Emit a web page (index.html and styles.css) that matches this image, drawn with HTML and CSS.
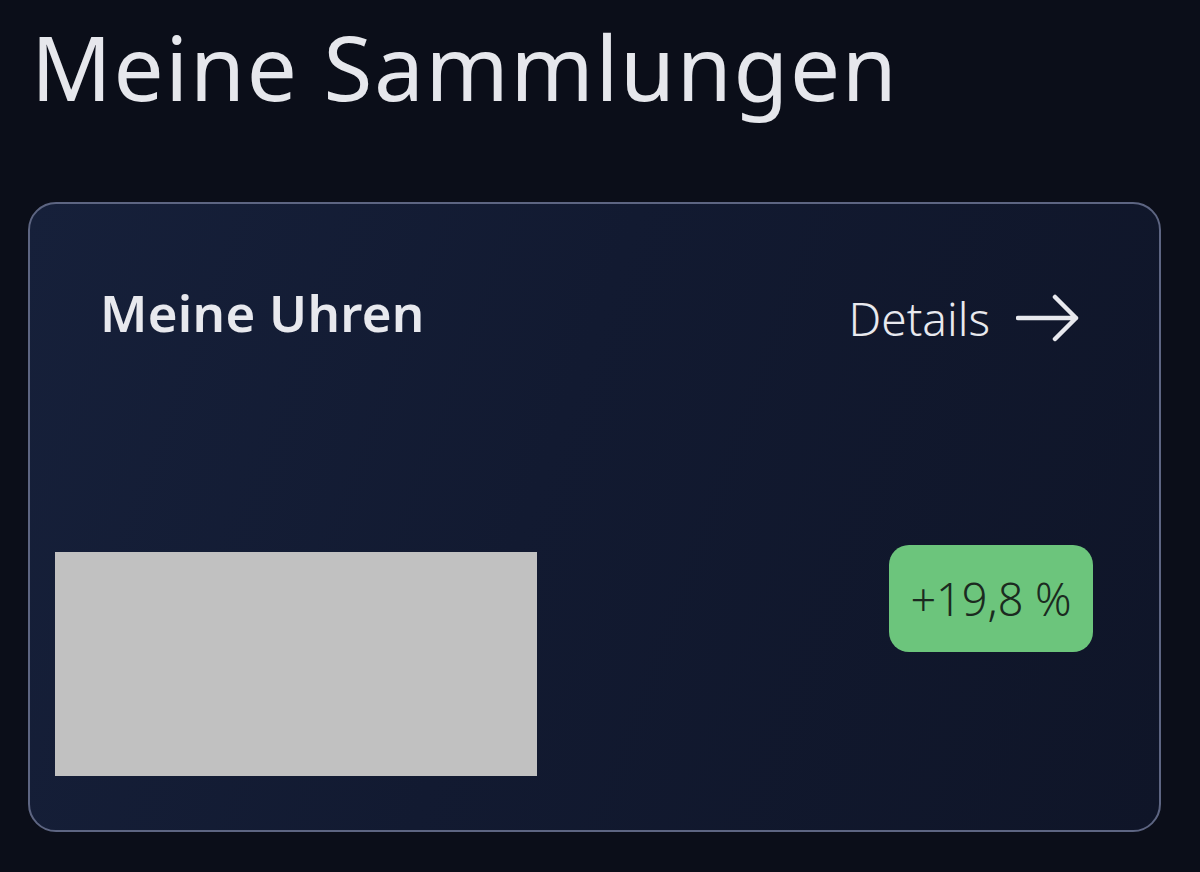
FILE: index.html
```html
<!DOCTYPE html>
<html lang="de">
<head>
    <meta charset="UTF-8">
    <meta name="viewport" content="width=device-width, initial-scale=1.0">
    <title>Meine Sammlungen</title>
    <link rel="stylesheet" href="styles.css">
</head>
<body>
    <div class="seite">
        <h1 class="titel">Meine Sammlungen</h1>

        <div class="karte">
            <div class="karte-kopf">
                <h2 class="karte-name">Meine Uhren</h2>
                <a class="details">
                    Details
                    <svg class="pfeil" width="64" height="48" viewBox="0 0 64 48">
                        <path d="M2 24 H60 M39 3 L60 24 L39 45" fill="none" stroke="#e8e9ee" stroke-width="4.5" stroke-linecap="round" stroke-linejoin="round"/>
                    </svg>
                </a>
            </div>

            <div class="karte-fuss">
                <div class="wert"></div>
                <span class="aenderung">+19,8 %</span>
            </div>
        </div>
    </div>
</body>
</html>
```

FILE: styles.css
```css
* {
    box-sizing: border-box;
}
body {
    margin: 0;
    background-color: #0b0e19;
    font-family: "Noto Sans", "Open Sans", sans-serif;
    color: #e8e9ee;
}
.seite {
    padding: 14px 39px 0 28px;
}
.titel {
    margin: 0 0 0 3px;
    font-size: 89px;
    font-weight: 400;
    line-height: 1.2;
    letter-spacing: 1.7px;
    color: #e6e7ec;
}
.karte {
    margin-top: 81px;
    height: 630px;
    border: 2px solid #5d6582;
    border-radius: 28px;
    background: linear-gradient(110deg, #16203a 0%, #121a31 45%, #0f1528 100%);
    display: flex;
    flex-direction: column;
    padding: 0 66px 54px 25px;
}
.karte-kopf {
    display: flex;
    align-items: flex-start;
    justify-content: space-between;
    margin-top: 78px;
    padding: 0 13px 0 45px;
}
.karte-name {
    margin: 0;
    font-size: 51px;
    font-weight: 600;
    line-height: 1.2;
    letter-spacing: 0.3px;
}
.details {
    display: flex;
    align-items: center;
    gap: 26px;
    margin-top: 5px;
    font-size: 46px;
    font-weight: 300;
    cursor: pointer;
}
.karte-fuss {
    flex-grow: 1;
    display: flex;
    align-items: flex-end;
    justify-content: space-between;
}
.wert {
    width: 482px;
    height: 224px;
    background-color: #c1c1c1;
}
.aenderung {
    margin-bottom: 124px;
    width: 204px;
    height: 107px;
    border-radius: 20px;
    background-color: #6cc57c;
    color: #1b2a20;
    font-size: 45px;
    font-weight: 300;
    display: flex;
    align-items: center;
    justify-content: center;
}
```
